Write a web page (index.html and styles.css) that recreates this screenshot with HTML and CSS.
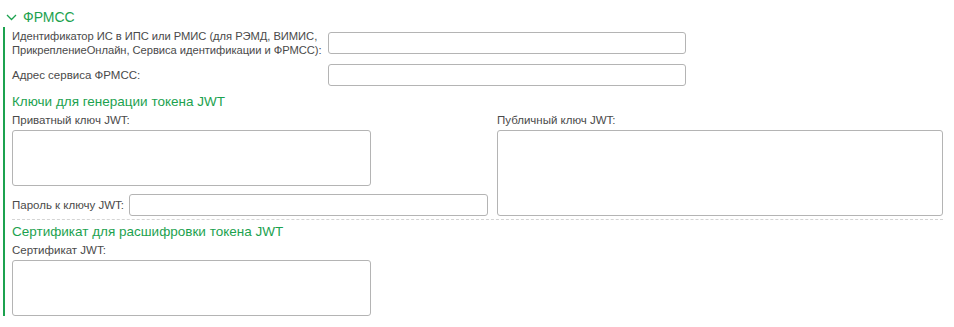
FILE: index.html
```html
<!DOCTYPE html>
<html lang="ru">
    <head>
        <title>ФРМСС</title>
        <meta charset="utf-8">
        <link rel="stylesheet" href="styles.css">
    </head>
    <body>
        <div class="group">
            <div class="group-head">
                <svg class="chevron" width="11" height="7" viewBox="0 0 11 7"><path d="M1 1l4.5 4.5L10 1" fill="none" stroke="#1ca24f" stroke-width="1.3"/></svg>
                <span class="group-title">ФРМСС</span>
            </div>
            <div class="group-body">
                <div class="row">
                    <label class="label label-wide label-tight" for="ident">Идентификатор ИС в ИПС или РМИС (для РЭМД, ВИМИС,<br>ПрикреплениеОнлайн, Сервиса идентификации и ФРМСС):</label>
                    <input class="field field-main" id="ident" type="text">
                </div>
                <div class="row row-addr">
                    <label class="label label-wide" for="addr">Адрес сервиса ФРМСС:</label>
                    <input class="field field-main" id="addr" type="text">
                </div>

                <div class="subtitle">Ключи для генерации токена JWT</div>
                <div class="columns">
                    <div class="col-left">
                        <label class="label" for="priv">Приватный ключ JWT:</label>
                        <textarea class="area area-small" id="priv"></textarea>
                        <div class="row row-pass">
                            <label class="label" for="pass">Пароль к ключу JWT:</label>
                            <input class="field field-pass" id="pass" type="text">
                        </div>
                    </div>
                    <div class="col-right">
                        <label class="label" for="pub">Публичный ключ JWT:</label>
                        <textarea class="area area-pub" id="pub"></textarea>
                    </div>
                </div>
                <div class="separator"></div>

                <div class="subtitle subtitle-cert">Сертификат для расшифровки токена JWT</div>
                <label class="label label-cert" for="cert">Сертификат JWT:</label>
                <textarea class="area area-small" id="cert"></textarea>
            </div>
        </div>
    </body>
</html>
```

FILE: styles.css
```css
body {
    margin: 0;
    background: #fff;
    font-family: "Liberation Sans", Arial, sans-serif;
    font-size: 11.5px;
    color: #4a4a4a;
}
.group {
    padding: 8px 0 0 3px;
    width: 940px;
}
.group-head {
    display: flex;
    align-items: center;
    height: 18px;
    padding-left: 3px;
}
.chevron {
    margin-right: 6px;
    margin-top: 1px;
}
.group-title {
    color: #1ca24f;
    font-size: 14px;
}
.group-body {
    border-left: 2px solid #1ca24f;
    padding: 2px 0 0 7px;
    margin-top: 1px;
}
.label {
    display: block;
    line-height: 14px;
    white-space: nowrap;
}
.label-wide {
    width: 311px;
    flex-shrink: 0;
}
.label-tight {
    font-size: 11.2px;
    letter-spacing: -0.05px;
}
.row {
    display: flex;
    align-items: center;
    gap: 5px;
}
.row-addr {
    margin-top: 7px;
}
.field, .area {
    display: block;
    box-sizing: border-box;
    border: 1px solid #b4b4b4;
    border-radius: 3px;
    background: #fff;
    font: inherit;
    margin: 0;
    padding: 2px 4px;
    resize: none;
    outline: none;
}
.field-main {
    width: 358px;
    height: 22px;
}
.subtitle {
    color: #1ca24f;
    font-size: 13.5px;
    line-height: 16px;
    margin-top: 8px;
}
.columns {
    display: flex;
    gap: 9px;
    margin-top: 3px;
}
.col-left {
    width: 476px;
}
.col-right {
    width: 446px;
}
.columns .label,
.label-cert {
    margin-bottom: 3px;
}
.area-small {
    width: 359px;
    height: 56px;
}
.area-pub {
    width: 446px;
    height: 86px;
}
.row-pass {
    margin-top: 8px;
    gap: 5px;
}
.columns .row-pass .label {
    margin-bottom: 0;
}
.field-pass {
    flex: 1;
    height: 22px;
}
.separator {
    border-top: 1px dashed #d4d4d4;
    margin-top: 3px;
    width: 931px;
}
.subtitle-cert {
    margin-top: 4px;
}
.label-cert {
    margin-top: 3px;
}
```
